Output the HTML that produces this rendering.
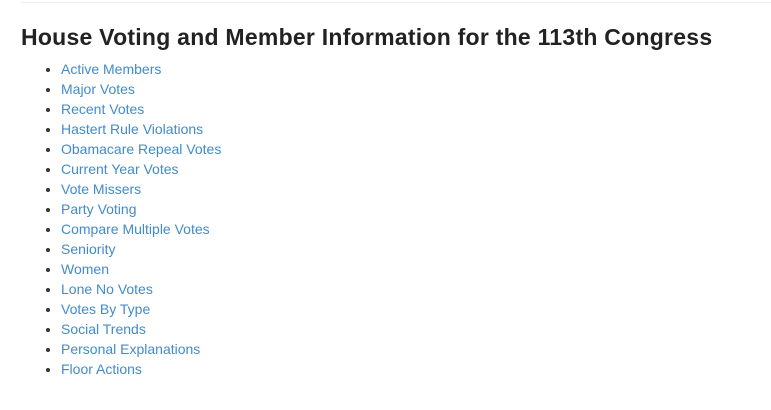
<!DOCTYPE html>
<html><head><meta charset="utf-8"><style>
body{margin:0;background:#fff;font-family:"Liberation Sans",Helvetica,Arial,sans-serif;color:#333;}
.hr{position:absolute;left:21px;right:0;top:2px;border-top:1px solid #eee;}
h1{position:absolute;left:21px;top:20px;margin:0;font-size:23px;font-weight:bold;line-height:34px;color:#222;white-space:nowrap;letter-spacing:0.25px;}
ul{position:absolute;left:21px;top:59px;margin:0;padding-left:40px;font-size:14px;line-height:20px;}
a{color:#428bca;text-decoration:none;}
</style></head><body>
<div class="hr"></div>
<h1>House Voting and Member Information for the 113th Congress</h1>
<ul>
<li><a>Active Members</a></li>
<li><a>Major Votes</a></li>
<li><a>Recent Votes</a></li>
<li><a>Hastert Rule Violations</a></li>
<li><a>Obamacare Repeal Votes</a></li>
<li><a>Current Year Votes</a></li>
<li><a>Vote Missers</a></li>
<li><a>Party Voting</a></li>
<li><a>Compare Multiple Votes</a></li>
<li><a>Seniority</a></li>
<li><a>Women</a></li>
<li><a>Lone No Votes</a></li>
<li><a>Votes By Type</a></li>
<li><a>Social Trends</a></li>
<li><a>Personal Explanations</a></li>
<li><a>Floor Actions</a></li>
</ul>
</body></html>
